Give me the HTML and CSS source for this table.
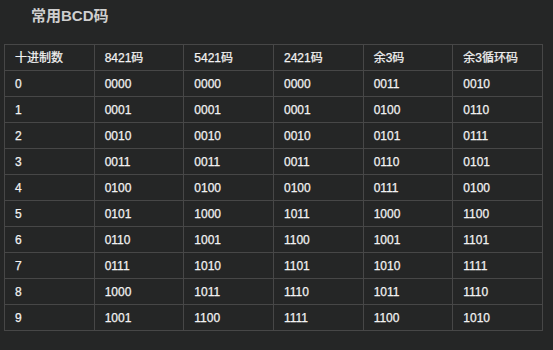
FILE: index.html
```html
<!DOCTYPE html>
<html lang="zh">
<head>
<meta charset="utf-8">
<link rel="stylesheet" href="styles.css">
</head>
<body>
<div class="page">
  <h3 class="title">常用BCD码</h3>
  <table class="bcd">
    <thead>
      <tr><th>十进制数</th><th>8421码</th><th>5421码</th><th>2421码</th><th>余3码</th><th>余3循环码</th></tr>
    </thead>
    <tbody>
      <tr><td>0</td><td>0000</td><td>0000</td><td>0000</td><td>0011</td><td>0010</td></tr>
      <tr><td>1</td><td>0001</td><td>0001</td><td>0001</td><td>0100</td><td>0110</td></tr>
      <tr><td>2</td><td>0010</td><td>0010</td><td>0010</td><td>0101</td><td>0111</td></tr>
      <tr><td>3</td><td>0011</td><td>0011</td><td>0011</td><td>0110</td><td>0101</td></tr>
      <tr><td>4</td><td>0100</td><td>0100</td><td>0100</td><td>0111</td><td>0100</td></tr>
      <tr><td>5</td><td>0101</td><td>1000</td><td>1011</td><td>1000</td><td>1100</td></tr>
      <tr><td>6</td><td>0110</td><td>1001</td><td>1100</td><td>1001</td><td>1101</td></tr>
      <tr><td>7</td><td>0111</td><td>1010</td><td>1101</td><td>1010</td><td>1111</td></tr>
      <tr><td>8</td><td>1000</td><td>1011</td><td>1110</td><td>1011</td><td>1110</td></tr>
      <tr><td>9</td><td>1001</td><td>1100</td><td>1111</td><td>1100</td><td>1010</td></tr>
    </tbody>
  </table>
</div>
</body>
</html>
```
FILE: styles.css
```css
html, body {
  margin: 0;
  padding: 0;
  background: #252626;
}
.page {
  padding: 6px 0 0 4px;
  font-family: "Liberation Sans", "Noto Sans CJK SC", sans-serif;
  color: #ececec;
}
.title {
  margin: 0 0 18px 27px;
  font-size: 15px;
  line-height: 20px;
  font-weight: bold;
  color: #cfcfcf;
}
.bcd {
  border-collapse: collapse;
  table-layout: fixed;
  width: 539px;
  font-size: 12px;
}
.bcd th, .bcd td {
  border: 1px solid #474747;
  height: 26px;
  padding: 0 0 0 10px;
  line-height: 18px;
  text-align: left;
  font-weight: normal;
  box-sizing: border-box;
  color: #f2f2f2;
  -webkit-text-stroke: 0.25px #f2f2f2;
}
```
